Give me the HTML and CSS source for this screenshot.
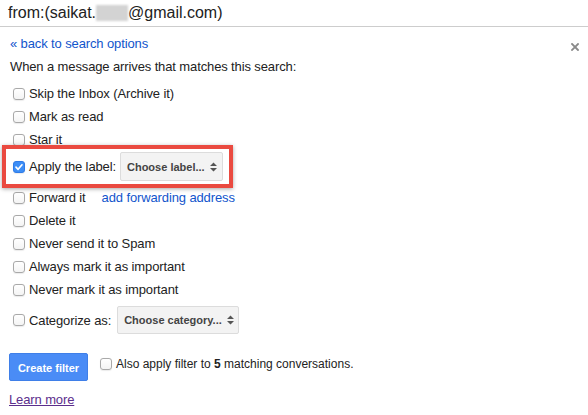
FILE: index.html
```html
<!DOCTYPE html>
<html>
<head>
<meta charset="utf-8">
<link rel="stylesheet" href="styles.css">
</head>
<body>
<div class="header">from:(saikat.<span class="blur"></span>@gmail.com)</div>
<div class="panel">
  <svg class="close" width="8" height="8" viewBox="0 0 8 8"><path d="M1 1L7 7M7 1L1 7" stroke="#8a8a8a" stroke-width="1.8" stroke-linecap="square"/></svg>
  <div class="back"><a class="link">« back to search options</a></div>
  <div class="intro">When a message arrives that matches this search:</div>
  <div class="opts">
    <div class="opt"><span class="cb"></span><span>Skip the Inbox (Archive it)</span></div>
    <div class="opt"><span class="cb"></span><span>Mark as read</span></div>
    <div class="opt"><span class="cb"></span><span>Star it</span></div>
    <div class="highlight">
      <div class="opt opt-tall"><span class="cb cb-on"><svg width="10" height="10" viewBox="0 0 10 10"><path d="M2 5.2L4.1 7.3L8 2.8" fill="none" stroke="#fff" stroke-width="1.7" stroke-linecap="round" stroke-linejoin="round"/></svg></span><span>Apply the label:</span>
        <div class="sel sel-label"><span>Choose label...</span><svg class="arr" width="7" height="10" viewBox="0 0 7 10"><path d="M3.5 0.5L7 4H0Z M3.5 9.5L7 6H0Z" fill="#555"/></svg></div>
      </div>
    </div>
    <div class="opt"><span class="cb"></span><span>Forward it</span><a class="link fwd">add forwarding address</a></div>
    <div class="opt"><span class="cb"></span><span>Delete it</span></div>
    <div class="opt"><span class="cb"></span><span>Never send it to Spam</span></div>
    <div class="opt"><span class="cb"></span><span>Always mark it as important</span></div>
    <div class="opt"><span class="cb"></span><span>Never mark it as important</span></div>
    <div class="opt opt-cat"><span class="cb"></span><span>Categorize as:</span>
      <div class="sel sel-cat"><span>Choose category...</span><svg class="arr" width="7" height="10" viewBox="0 0 7 10"><path d="M3.5 0.5L7 4H0Z M3.5 9.5L7 6H0Z" fill="#555"/></svg></div>
    </div>
  </div>
  <div class="actions">
    <div class="btn">Create filter</div>
    <div class="also"><span class="cb"></span><span>Also apply filter to <b>5</b> matching conversations.</span></div>
  </div>
  <div class="learn"><a class="learnlink">Learn more</a></div>
</div>
</body>
</html>
```
FILE: styles.css
```css
* { box-sizing: border-box; }
body {
  margin: 0;
  background: #fff;
  font-family: "Liberation Sans", Arial, sans-serif;
  font-size: 13px;
  letter-spacing: -0.12px;
  color: #222;
}
.header {
  height: 27px;
  line-height: 26px;
  font-size: 16px;
  letter-spacing: 0;
  padding-left: 8px;
  border-bottom: 1px solid #cdcdcd;
  color: #222;
  white-space: nowrap;
}
.blur {
  display: inline-block;
  width: 32px;
  height: 16px;
  vertical-align: -3px;
  background: #d3d3d3;
  filter: blur(1px);
}
.panel {
  position: relative;
  padding: 0 10px;
}
.close {
  position: absolute;
  top: 11px;
  right: 9px;
}
.link { color: #1155cc; text-decoration: none; }
.back {
  margin-top: 5px;
  height: 23px;
  line-height: 23px;
}
.intro {
  height: 23px;
  line-height: 23px;
}
.opts { margin-top: 4px; }
.opt {
  display: flex;
  align-items: center;
  height: 23px;
  white-space: nowrap;
}
.cb {
  flex: none;
  width: 12px;
  height: 12px;
  margin-left: 3px;
  margin-right: 4px;
  border: 1px solid #a9a9a9;
  border-radius: 3px;
  background: linear-gradient(#fff, #f4f4f4);
  box-shadow: 0 0.5px 1px rgba(0,0,0,0.08);
  display: flex;
  align-items: center;
  justify-content: center;
}
.cb-on {
  background: #3d8ef6;
  border-color: #2f7be8;
}
.highlight {
  margin: -6px 0 -2px -8px;
  width: 231px;
  border: 4px solid #ea4a40;
  box-shadow: 0 1px 4px rgba(0,0,0,0.35);
  background: #fff;
  position: relative;
  z-index: 1;
}
.opt-tall {
  height: 35px;
  padding-left: 4px;
}
.sel {
  display: flex;
  align-items: center;
  justify-content: space-between;
  height: 29px;
  background: #f3f3f3;
  border: 1px solid #dcdcdc;
  border-radius: 2px;
  font-size: 11px;
  font-weight: bold;
  letter-spacing: 0;
  color: #444;
}
.sel-label {
  margin-left: 4px;
  width: 103px;
  padding: 0 5px 0 6px;
}
.sel-cat {
  margin-left: 6px;
  width: 122px;
  height: 28px;
  padding: 0 4px 0 6px;
}
.arr { flex: none; }
.fwd { margin-left: 16px; }
.opt-cat {
  height: 28px;
  margin-top: 5px;
}
.actions {
  display: flex;
  align-items: flex-start;
  margin-top: 19px;
  margin-left: -1px;
}
.btn {
  width: 79px;
  height: 28px;
  line-height: 28px;
  text-align: center;
  background: #4a8cf6;
  border: 1px solid #3f7fe8;
  border-radius: 2px;
  color: #fff;
  font-size: 11px;
  font-weight: bold;
  letter-spacing: 0;
}
.also {
  display: flex;
  align-items: center;
  height: 18px;
  margin-top: 2px;
  margin-left: 9px;
  font-size: 12px;
  letter-spacing: 0;
  white-space: nowrap;
}
.learn {
  margin-top: 10px;
  margin-left: -1px;
  height: 18px;
  line-height: 18px;
}
.learnlink {
  color: #5b2e8c;
  text-decoration: underline;
}
```
